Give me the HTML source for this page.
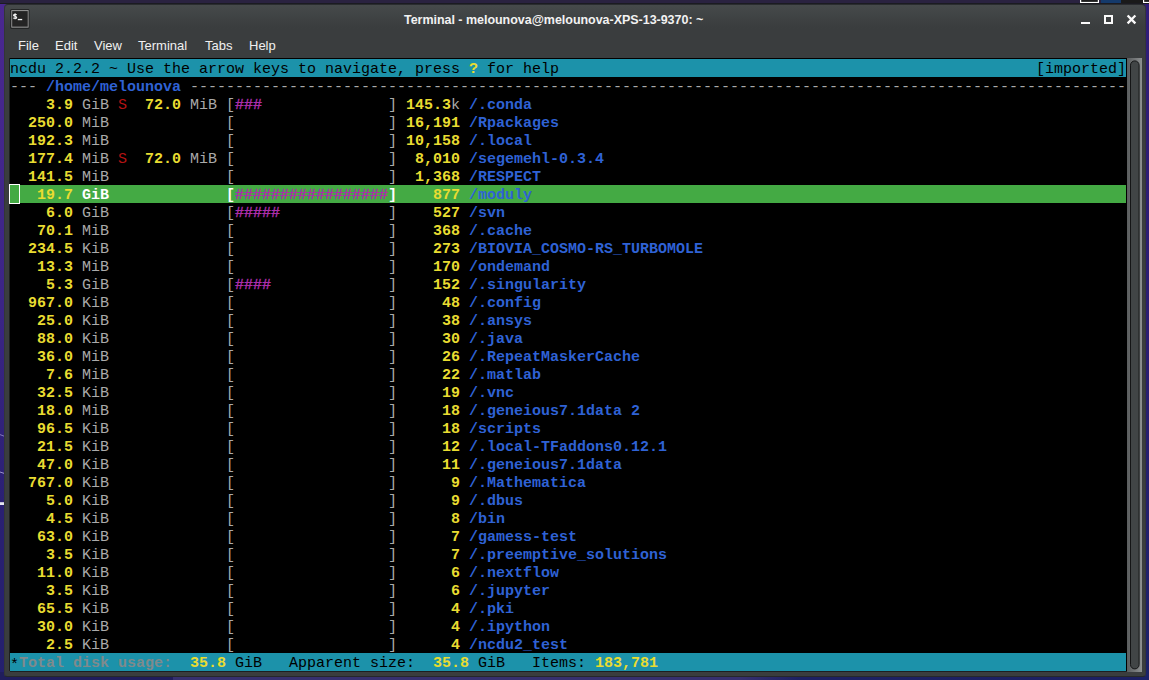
<!DOCTYPE html>
<html><head><meta charset="utf-8">
<style>
html,body{margin:0;padding:0;}
body{width:1149px;height:680px;overflow:hidden;position:relative;background:#2d1e6b;font-family:"Liberation Sans",sans-serif;}
#deskL{position:absolute;left:0;top:4px;width:8px;height:676px;background:linear-gradient(#4a2890,#3b2585 45%,#2a2072 75%,#24206d);}
#deskT{position:absolute;left:0;top:0;width:1149px;height:4px;background:#2a2240;border-bottom:1px solid #1b1b21;box-sizing:content-box;height:3px;}
#deskB{position:absolute;left:0;top:672px;width:1149px;height:8px;background:linear-gradient(90deg,#201d5c 0,#201d5c 173px,#36306f 173px,#36306f 740px,#1d2162 800px,#1c2062);}
#deskR{position:absolute;left:1140px;top:4px;width:9px;height:676px;background:linear-gradient(#301d78,#2a1e72 50%,#1b2268);}
#win{position:absolute;left:4px;top:4px;width:1142px;height:673px;background:linear-gradient(#464a4b,#3b3e3f 20px,#3a3d3e 24px);border-radius:4px 4px 3px 3px;box-sizing:border-box;border:1px solid #333637;border-top-color:#2a2c2f;border-bottom-color:#26282a;}
#title{position:absolute;left:0;top:2px;width:1149px;height:37px;line-height:37px;color:#f2f2f2;font-weight:bold;font-size:12.5px;letter-spacing:-0.03px;}
#title span{position:absolute;left:404px;top:0;white-space:nowrap;}
#menu{position:absolute;left:0;top:33px;height:25px;line-height:25px;font-size:13px;color:#f0f0f0;}
#menu span{position:absolute;top:0;white-space:nowrap;}
#term{position:absolute;left:10px;top:58px;width:1117px;height:613px;background:#000;box-shadow:-1px 0 0 #1d1f20, 0 1px 0 #1d1f20;}
#rows{position:absolute;left:10px;top:59px;width:1116px;font-family:"Liberation Mono",monospace;font-size:15px;letter-spacing:-0.0017px;line-height:22px;color:#aaaaaa;}
.r{height:18px;white-space:pre;overflow:hidden;}
.r b{font-weight:bold;}
.hd{background:#1c92aa;color:#000;}
.sel{background:#44aa44;}
.y{color:#e9dc31;}
.b{color:#2f62d5;}
.w{color:#ffffff;}
.g{color:#7f8a8c;}
.rd{color:#b41313;}
.m{color:#ac2eab;-webkit-text-stroke:0.4px #ac2eab;}
#cursor{position:absolute;left:9px;top:184px;width:11px;height:20px;box-sizing:border-box;border:1px solid #fff;}
#sb{position:absolute;left:1127px;top:58px;width:15px;height:614px;background:linear-gradient(90deg,#5a5d5e,#6d7071 40%,#8d9091);}
#sl{position:absolute;left:1130px;top:60px;width:10px;height:609px;box-sizing:border-box;border:1px solid #151617;border-radius:5px;background:#414546;}
</style></head><body>
<div id="deskT"></div><div id="deskL"></div><div id="deskB"></div><div id="deskR"></div>
<svg width="6" height="680" style="position:absolute;left:0;top:0"><path d="M0 434.6 L4.2 436.2" stroke="#8d84c4" stroke-width="0.9"/><path d="M0 472 L4.2 473.4" stroke="#a9a2d4" stroke-width="0.9"/><rect x="0" y="502.2" width="4.2" height="2.8" fill="#e6e6f0"/></svg>
<div id="win"></div>
<div id="title"><span>Terminal - melounova@melounova-XPS-13-9370: ~</span></div>
<div id="menu"><span style="left:18px">File</span><span style="left:55px">Edit</span><span style="left:94px">View</span><span style="left:138px">Terminal</span><span style="left:205px">Tabs</span><span style="left:249px">Help</span></div>
<svg id="ico" width="1149" height="40" viewBox="0 0 1149 40" style="position:absolute;left:0;top:0">
<rect x="10.3" y="9.2" width="19.1" height="19.6" rx="1.1" fill="#1b1c1c"/>
<rect x="11.2" y="10.1" width="17.5" height="17.6" rx="0.4" fill="#8f8f8f"/>
<rect x="12.2" y="11.1" width="15.5" height="15.5" fill="#242424"/>
<path d="M16.7 14.9 C16 14.2 13.5 14 13.5 15.3 C13.5 16.6 16.7 16 16.7 17.5 C16.7 18.9 14 18.6 13.2 17.9 M15.1 13.2 V19.2" stroke="#f2f2f2" stroke-width="1.15" fill="none"/>
<rect x="17.8" y="18.9" width="4.4" height="1.3" fill="#f4f4f4"/>
<rect x="1081" y="22" width="9" height="2" fill="#fafafa"/>
<rect x="1105" y="16" width="7" height="7" fill="none" stroke="#fafafa" stroke-width="2"/>
<path d="M1128.4 16.3 L1134.6 22.6 M1134.6 16.3 L1128.4 22.6" stroke="#fafafa" stroke-width="2.3" stroke-linecap="square" fill="none"/>
<rect x="1080" y="0" width="19" height="3" fill="#ffffff"/><rect x="1081.2" y="0" width="16.6" height="1.9" fill="#1c1c1c"/>
<rect x="1101" y="0" width="20" height="3" fill="#153a6b"/>
<rect x="1121" y="0" width="28" height="3" fill="#1a1a1a"/>
<rect x="1143" y="0" width="6" height="3" fill="#ffffff"/><rect x="1144.2" y="0" width="5" height="1.9" fill="#1c1c1c"/>
</svg>
<div id="term"></div>
<div id="rows">
<div class="r hd">ncdu 2.2.2 ~ Use the arrow keys to navigate, press <b class="y">?</b> for help                                                     [imported]</div>
<div class="r">--- <b class="b">/home/melounova</b> --------------------------------------------------------------------------------------------------------</div>
<div class="r"> <b class="y">   3.9</b> GiB <span class="rd">S</span> <b class="y"> 72.0</b> MiB [<span class="m">###</span>              ] <b class="y">145.3</b>k <b class="b">/.conda</b></div>
<div class="r"> <b class="y"> 250.0</b> MiB             [<span class="m"></span>                 ] <b class="y">16,191</b> <b class="b">/Rpackages</b></div>
<div class="r"> <b class="y"> 192.3</b> MiB             [<span class="m"></span>                 ] <b class="y">10,158</b> <b class="b">/.local</b></div>
<div class="r"> <b class="y"> 177.4</b> MiB <span class="rd">S</span> <b class="y"> 72.0</b> MiB [<span class="m"></span>                 ]  <b class="y">8,010</b> <b class="b">/segemehl-0.3.4</b></div>
<div class="r"> <b class="y"> 141.5</b> MiB             [<span class="m"></span>                 ]  <b class="y">1,368</b> <b class="b">/RESPECT</b></div>
<div class="r sel"> <b class="y">  19.7</b> <b class="w">GiB</b>             <b class="w">[</b><span class="m">#################</span><b class="w">]</b>    <b class="y">877</b> <b class="b">/moduly</b></div>
<div class="r"> <b class="y">   6.0</b> GiB             [<span class="m">#####</span>            ]    <b class="y">527</b> <b class="b">/svn</b></div>
<div class="r"> <b class="y">  70.1</b> MiB             [<span class="m"></span>                 ]    <b class="y">368</b> <b class="b">/.cache</b></div>
<div class="r"> <b class="y"> 234.5</b> KiB             [<span class="m"></span>                 ]    <b class="y">273</b> <b class="b">/BIOVIA_COSMO-RS_TURBOMOLE</b></div>
<div class="r"> <b class="y">  13.3</b> MiB             [<span class="m"></span>                 ]    <b class="y">170</b> <b class="b">/ondemand</b></div>
<div class="r"> <b class="y">   5.3</b> GiB             [<span class="m">####</span>             ]    <b class="y">152</b> <b class="b">/.singularity</b></div>
<div class="r"> <b class="y"> 967.0</b> KiB             [<span class="m"></span>                 ]     <b class="y">48</b> <b class="b">/.config</b></div>
<div class="r"> <b class="y">  25.0</b> KiB             [<span class="m"></span>                 ]     <b class="y">38</b> <b class="b">/.ansys</b></div>
<div class="r"> <b class="y">  88.0</b> KiB             [<span class="m"></span>                 ]     <b class="y">30</b> <b class="b">/.java</b></div>
<div class="r"> <b class="y">  36.0</b> MiB             [<span class="m"></span>                 ]     <b class="y">26</b> <b class="b">/.RepeatMaskerCache</b></div>
<div class="r"> <b class="y">   7.6</b> MiB             [<span class="m"></span>                 ]     <b class="y">22</b> <b class="b">/.matlab</b></div>
<div class="r"> <b class="y">  32.5</b> KiB             [<span class="m"></span>                 ]     <b class="y">19</b> <b class="b">/.vnc</b></div>
<div class="r"> <b class="y">  18.0</b> MiB             [<span class="m"></span>                 ]     <b class="y">18</b> <b class="b">/.geneious7.1data 2</b></div>
<div class="r"> <b class="y">  96.5</b> KiB             [<span class="m"></span>                 ]     <b class="y">18</b> <b class="b">/scripts</b></div>
<div class="r"> <b class="y">  21.5</b> KiB             [<span class="m"></span>                 ]     <b class="y">12</b> <b class="b">/.local-TFaddons0.12.1</b></div>
<div class="r"> <b class="y">  47.0</b> KiB             [<span class="m"></span>                 ]     <b class="y">11</b> <b class="b">/.geneious7.1data</b></div>
<div class="r"> <b class="y"> 767.0</b> KiB             [<span class="m"></span>                 ]      <b class="y">9</b> <b class="b">/.Mathematica</b></div>
<div class="r"> <b class="y">   5.0</b> KiB             [<span class="m"></span>                 ]      <b class="y">9</b> <b class="b">/.dbus</b></div>
<div class="r"> <b class="y">   4.5</b> KiB             [<span class="m"></span>                 ]      <b class="y">8</b> <b class="b">/bin</b></div>
<div class="r"> <b class="y">  63.0</b> KiB             [<span class="m"></span>                 ]      <b class="y">7</b> <b class="b">/gamess-test</b></div>
<div class="r"> <b class="y">   3.5</b> KiB             [<span class="m"></span>                 ]      <b class="y">7</b> <b class="b">/.preemptive_solutions</b></div>
<div class="r"> <b class="y">  11.0</b> KiB             [<span class="m"></span>                 ]      <b class="y">6</b> <b class="b">/.nextflow</b></div>
<div class="r"> <b class="y">   3.5</b> KiB             [<span class="m"></span>                 ]      <b class="y">6</b> <b class="b">/.jupyter</b></div>
<div class="r"> <b class="y">  65.5</b> KiB             [<span class="m"></span>                 ]      <b class="y">4</b> <b class="b">/.pki</b></div>
<div class="r"> <b class="y">  30.0</b> KiB             [<span class="m"></span>                 ]      <b class="y">4</b> <b class="b">/.ipython</b></div>
<div class="r"> <b class="y">   2.5</b> KiB             [<span class="m"></span>                 ]      <b class="y">4</b> <b class="b">/ncdu2_test</b></div>
<div class="r hd"><span style="position:relative;top:2px">*</span><b class="g">Total disk usage:</b>  <b class="y">35.8</b> GiB   Apparent size:  <b class="y">35.8</b> GiB   Items: <b class="y">183,781</b></div>
</div>
<div id="cursor"></div>
<div id="sb"></div><svg width="20" height="620" style="position:absolute;left:1125px;top:56px"><rect x="5.5" y="4.9" width="8.6" height="608" rx="4.3" fill="#414546" stroke="#141516" stroke-width="1"/></svg>
</body></html>
